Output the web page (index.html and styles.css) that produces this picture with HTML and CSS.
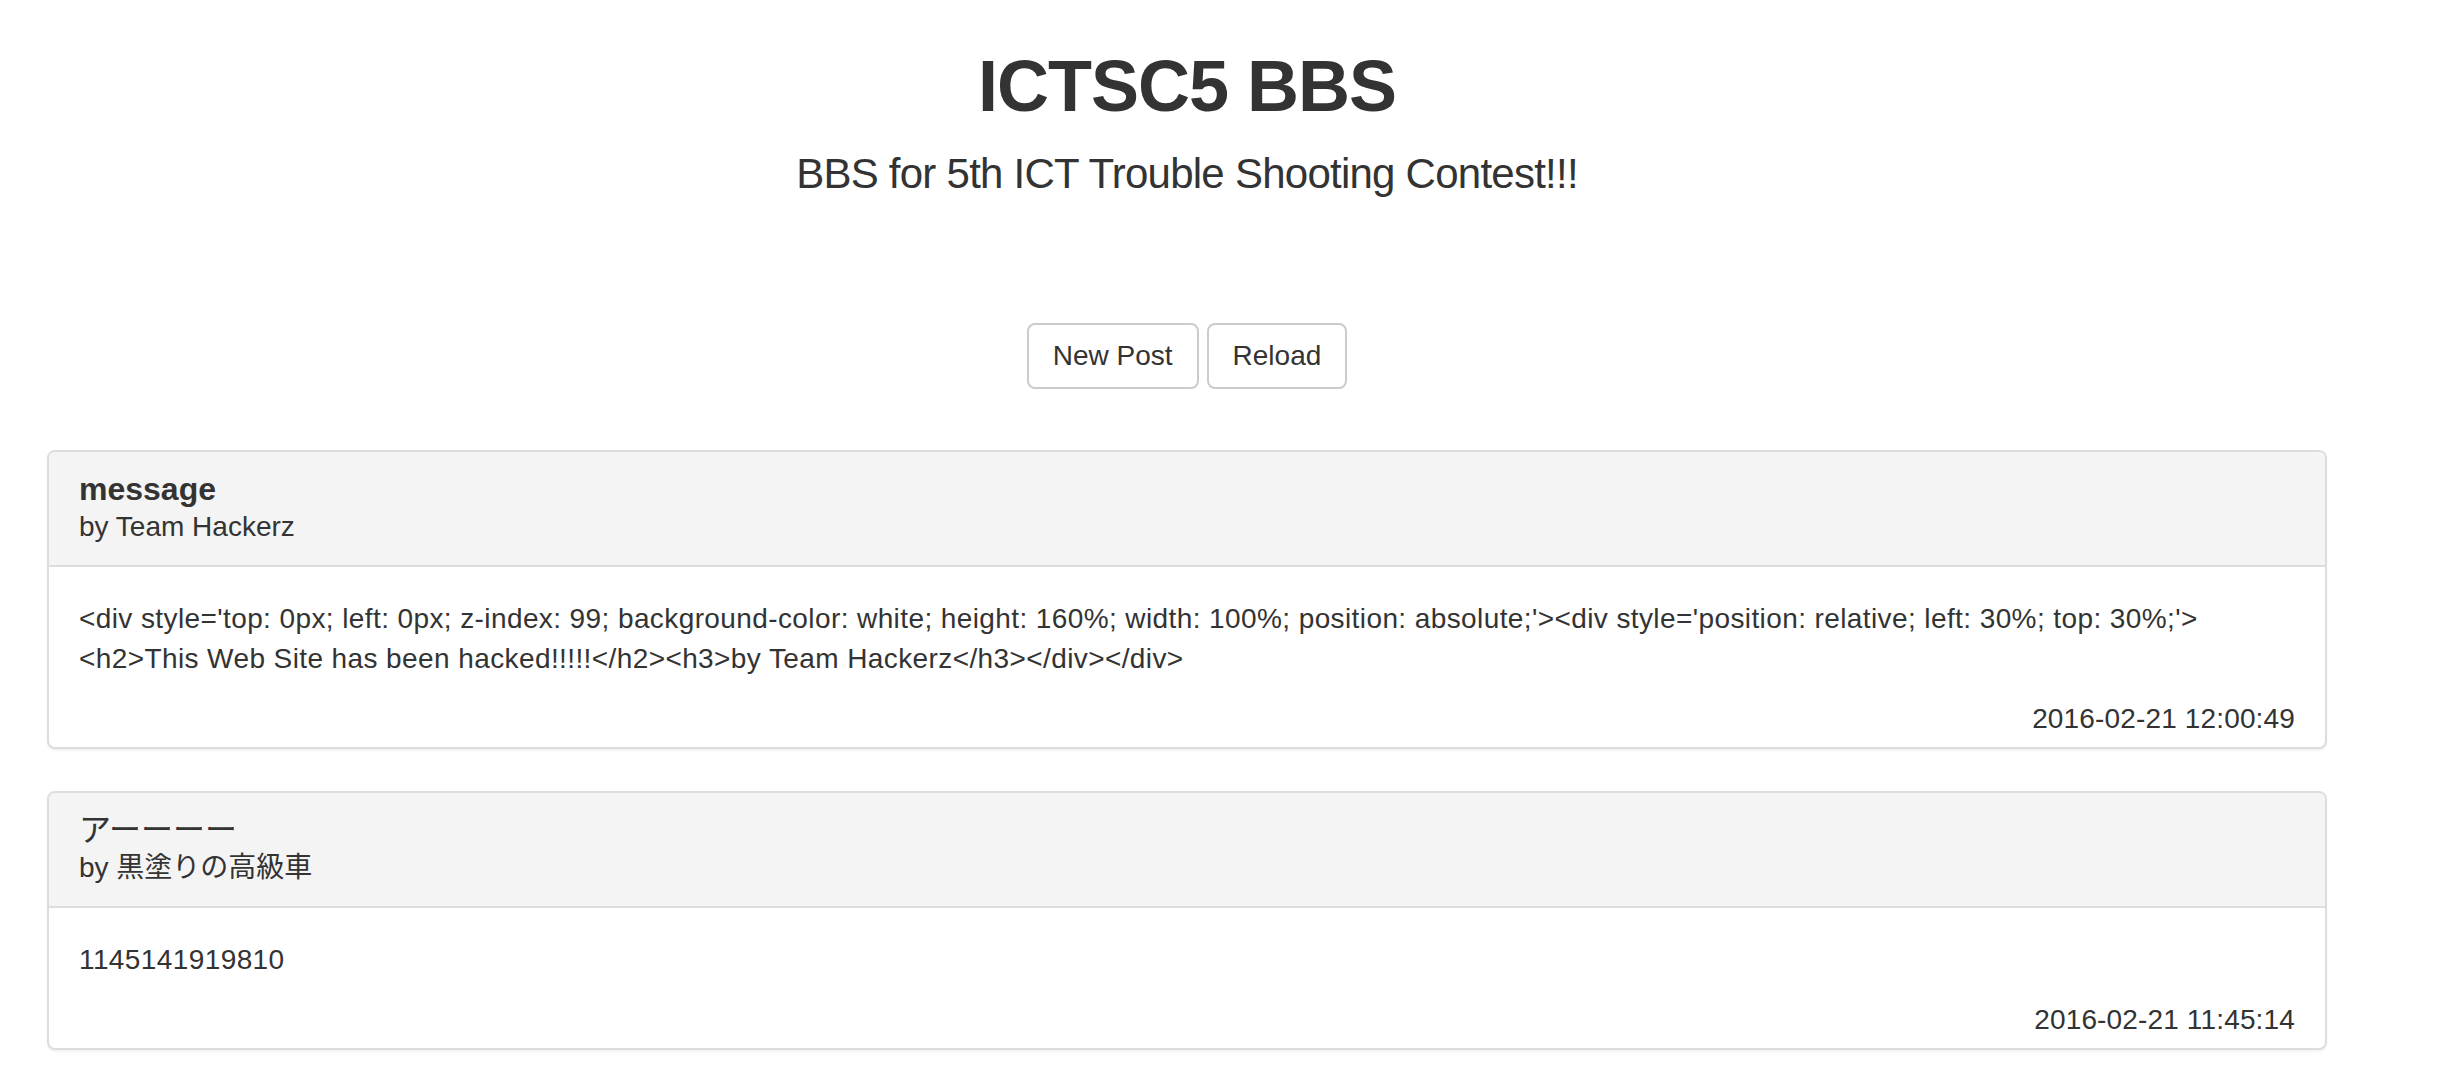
FILE: index.html
```html
<!DOCTYPE html>
<html lang="ja">
<head>
<meta charset="utf-8">
<title>ICTSC5 BBS</title>
<link rel="stylesheet" href="styles.css">
</head>
<body>
<div class="container">
  <header class="site-header">
    <h1 class="site-title">ICTSC5 BBS</h1>
    <p class="lead">BBS for 5th ICT Trouble Shooting Contest!!!</p>
  </header>
  <div class="actions">
    <button class="btn" type="button">New Post</button>
    <button class="btn" type="button">Reload</button>
  </div>
  <div class="posts">
    <div class="panel">
      <div class="panel-heading">
        <h3 class="panel-title">message</h3>
        <div class="panel-author">by Team Hackerz</div>
      </div>
      <div class="panel-body">
        <p class="message">&lt;div style='top: 0px; left: 0px; z-index: 99; background-color: white; height: 160%; width: 100%; position: absolute;'&gt;&lt;div style='position: relative; left: 30%; top: 30%;'&gt; &lt;h2&gt;This Web Site has been hacked!!!!!&lt;/h2&gt;&lt;h3&gt;by Team Hackerz&lt;/h3&gt;&lt;/div&gt;&lt;/div&gt;</p>
        <div class="timestamp">2016-02-21 12:00:49</div>
      </div>
    </div>
    <div class="panel">
      <div class="panel-heading">
        <h3 class="panel-title panel-title-cjk">アーーーー</h3>
        <div class="panel-author">by 黒塗りの高級車</div>
      </div>
      <div class="panel-body">
        <p class="message">1145141919810</p>
        <div class="timestamp">2016-02-21 11:45:14</div>
      </div>
    </div>
  </div>
</div>
</body>
</html>
```
FILE: styles.css
```css
* {
  box-sizing: border-box;
}

html, body {
  margin: 0;
  padding: 0;
  background: #ffffff;
}

body {
  font-family: "Liberation Sans", Arial, "Noto Sans CJK JP", sans-serif;
  font-size: 28px;
  line-height: 40px;
  color: #333333;
}

.container {
  width: 2280px;
  margin-left: 47px;
}

.site-header {
  text-align: center;
  padding-top: 47px;
}

.site-title {
  margin: 0 0 18px;
  font-size: 72px;
  line-height: 79px;
  font-weight: bold;
  letter-spacing: -1px;
}

.lead {
  margin: 0;
  font-size: 42px;
  line-height: 59px;
  font-weight: normal;
  letter-spacing: -0.75px;
}

.actions {
  display: flex;
  justify-content: center;
  gap: 8px;
  margin-top: 120px;
}

.btn {
  font-family: inherit;
  font-size: 28px;
  line-height: 40px;
  color: #333333;
  background: #ffffff;
  border: 2px solid #cccccc;
  border-radius: 8px;
  padding: 11px 24px;
  margin: 0;
}

.posts {
  margin-top: 61px;
}

.panel {
  border: 2px solid #dddddd;
  border-radius: 8px;
  background: #ffffff;
  box-shadow: 0 2px 2px rgba(0, 0, 0, 0.05);
  margin-bottom: 42px;
  overflow: hidden;
}

.panel-heading {
  background: #f4f4f4;
  border-bottom: 2px solid #dddddd;
  padding: 20px 30px 18px;
}

.panel-title {
  margin: 0;
  font-size: 32px;
  line-height: 35px;
  font-weight: bold;
}

.panel-title-cjk {
  font-weight: normal;
}

.panel-author {
  font-size: 28px;
  line-height: 40px;
}

.panel-body {
  padding: 32px 30px 8px;
}

.message {
  margin: 0 0 20px;
  letter-spacing: 0.4px;
}

.timestamp {
  text-align: right;
  letter-spacing: 0.15px;
}
```
